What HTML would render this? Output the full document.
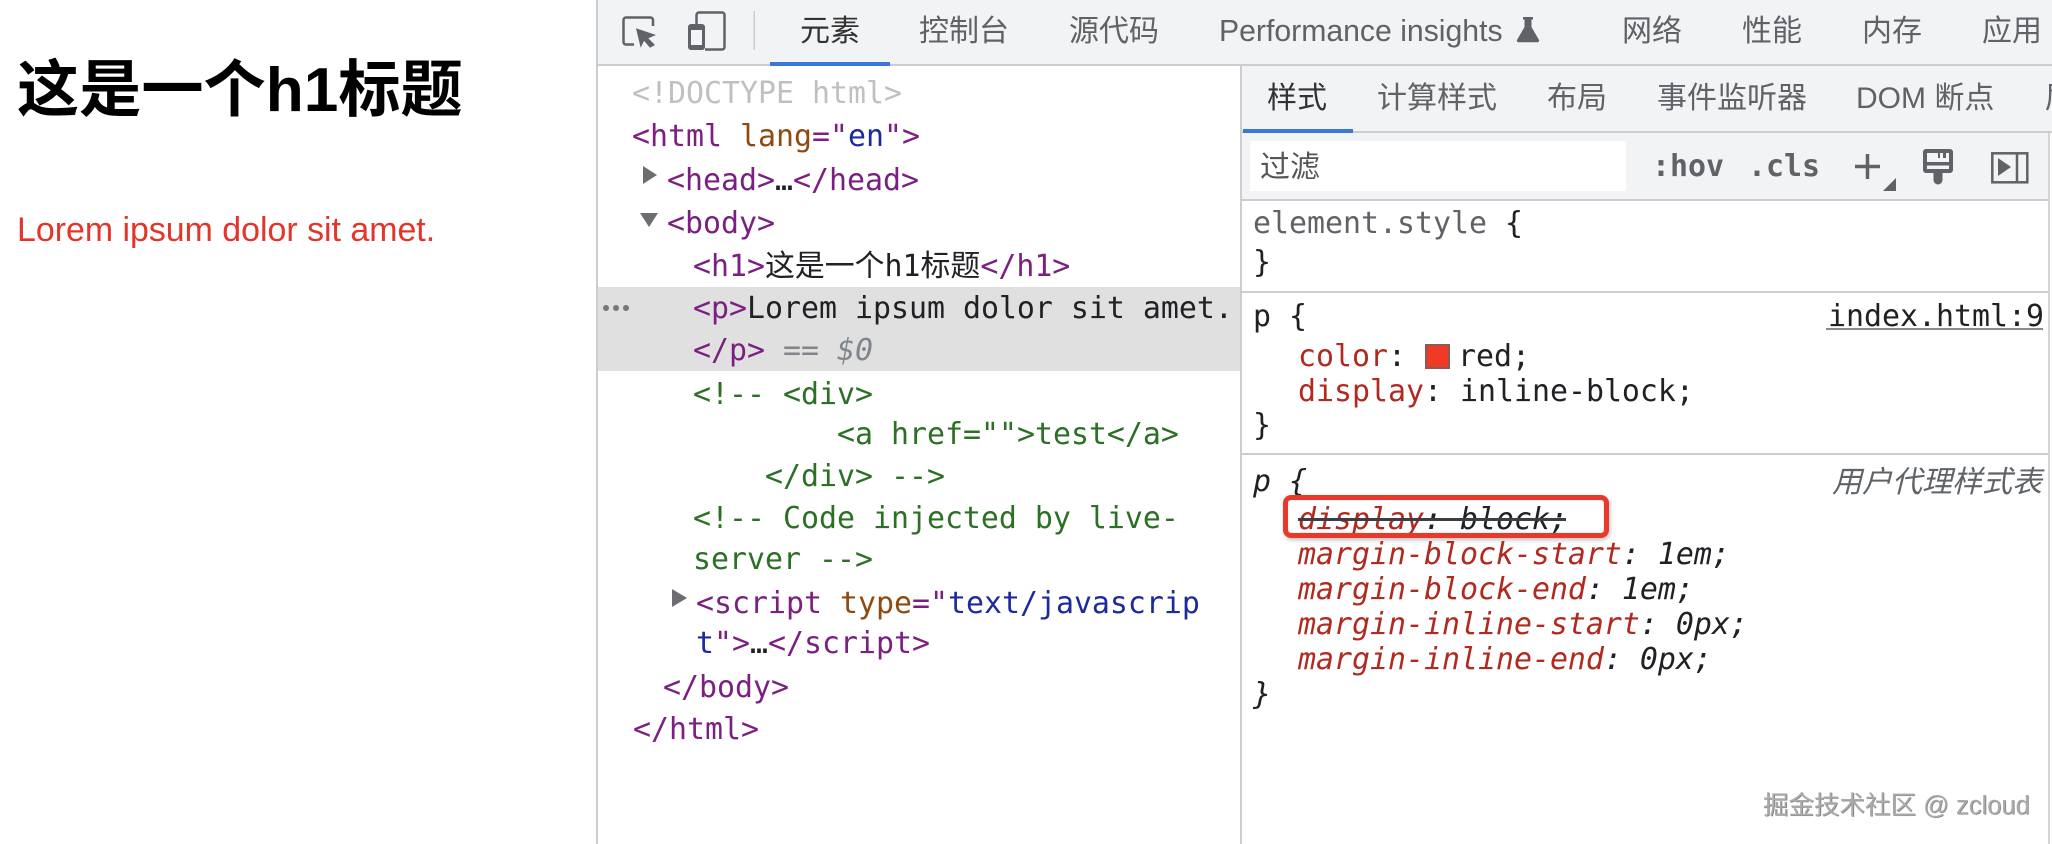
<!DOCTYPE html>
<html lang="zh"><head><meta charset="utf-8"><title>DevTools</title>
<style>
html,body{margin:0;padding:0;background:#fff;}
#r{position:relative;width:2052px;height:844px;overflow:hidden;background:#fff;filter:blur(.35px);}
#r>div{position:absolute;}
.b{background:#cbcdd0;}
.t{font:30px/40px "Liberation Sans","Noto Sans CJK SC",sans-serif;color:#5f6368;white-space:pre;margin-top:1px;}
.m{font:29.9px/40px "DejaVu Sans Mono","Liberation Mono","Noto Sans CJK SC",monospace;white-space:pre;color:#202124;margin-top:1px;}
.tg{color:#7b2080}.at{color:#8f4a12}.vl{color:#1c2a9c}.c{color:#2b7024}.pr{color:#b02a20}
.g{color:#5f6368}
.i{font-style:italic}
</style></head><body><div id="r">
<div style="left:0;top:0;width:597px;height:844px;background:#fff"></div>
<div style="left:17px;top:53px;font:bold 62.2px/76px 'Liberation Sans','Noto Sans CJK SC',sans-serif;color:#000;white-space:pre">这是一个h1标题</div>
<div style="left:17px;top:210px;font:33.9px/40px 'Liberation Sans',sans-serif;color:#e3352a;white-space:pre">Lorem ipsum dolor sit amet.</div>

<div style="left:597px;top:0;width:1455px;height:65px;background:#f1f3f4"></div>
<div class="b" style="left:597px;top:64px;width:1455px;height:2px"></div>
<div style="left:770px;top:62px;width:120px;height:4px;background:#3a76d8"></div>
<div class="b" style="left:596px;top:0;width:1.5px;height:844px"></div>

<div class="t" style="left:800px;top:11px;color:#333">元素</div>
<div class="t" style="left:919px;top:11px">控制台</div>
<div class="t" style="left:1069px;top:11px">源代码</div>
<div class="t" style="left:1219px;top:11px;font-size:30.2px">Performance insights</div>
<div class="t" style="left:1622px;top:11px">网络</div>
<div class="t" style="left:1742px;top:11px">性能</div>
<div class="t" style="left:1862px;top:11px">内存</div>
<div class="t" style="left:1982px;top:11px">应用</div>

<div style="left:598px;top:287px;width:642px;height:84px;background:#e0e0e0"></div>
<div style="left:603px;top:305px;width:6px;height:6px;border-radius:50%;background:#777;box-shadow:10px 0 #777,20px 0 #777"></div>

<div class="m" style="left:632px;top:73px;color:#c0c0c0">&lt;!DOCTYPE html&gt;</div>
<div class="m" style="left:632px;top:116px"><span class="tg">&lt;html</span> <span class="at">lang</span><span class="tg">="</span><span class="vl">en</span><span class="tg">"&gt;</span></div>
<div class="m" style="left:667px;top:160px"><span class="tg">&lt;head&gt;</span>…<span class="tg">&lt;/head&gt;</span></div>
<div class="m" style="left:667px;top:203px"><span class="tg">&lt;body&gt;</span></div>
<div class="m" style="left:693px;top:246px"><span class="tg">&lt;h1&gt;</span>这是一个h1标题<span class="tg">&lt;/h1&gt;</span></div>
<div class="m" style="left:693px;top:288px"><span class="tg">&lt;p&gt;</span>Lorem ipsum dolor sit amet.</div>
<div class="m" style="left:693px;top:330px"><span class="tg">&lt;/p&gt;</span> <span style="color:#80868b">==</span> <span class="i" style="color:#80868b">$0</span></div>
<div class="m c" style="left:693px;top:374px">&lt;!-- &lt;div&gt;</div>
<div class="m c" style="left:837px;top:414px">&lt;a href=""&gt;test&lt;/a&gt;</div>
<div class="m c" style="left:765px;top:456px">&lt;/div&gt; --&gt;</div>
<div class="m c" style="left:693px;top:498px">&lt;!-- Code injected by live-</div>
<div class="m c" style="left:693px;top:539px">server --&gt;</div>
<div class="m" style="left:696px;top:583px"><span class="tg">&lt;script</span> <span class="at">type</span><span class="tg">="</span><span class="vl">text/javascrip</span></div>
<div class="m" style="left:696px;top:623px"><span class="vl">t</span><span class="tg">"&gt;</span>…<span class="tg">&lt;/script&gt;</span></div>
<div class="m" style="left:663px;top:667px"><span class="tg">&lt;/body&gt;</span></div>
<div class="m" style="left:633px;top:709px"><span class="tg">&lt;/html&gt;</span></div>

<div style="left:1242px;top:66px;width:806px;height:134px;background:#f1f3f4"></div>
<div style="left:1242px;top:66px;width:810px;height:66px;background:#f1f3f4"></div>
<div class="b" style="left:1240px;top:66px;width:2px;height:778px"></div>
<div class="b" style="left:1242px;top:131px;width:810px;height:2px"></div>
<div style="left:1243px;top:129px;width:110px;height:4px;background:#3a76d8"></div>
<div class="t" style="left:1267px;top:78px;color:#333">样式</div>
<div class="t" style="left:1377px;top:78px">计算样式</div>
<div class="t" style="left:1547px;top:78px">布局</div>
<div class="t" style="left:1657px;top:78px">事件监听器</div>
<div class="t" style="left:1856px;top:78px">DOM 断点</div>
<div class="t" style="left:2045px;top:78px">层</div>
<div style="left:2048px;top:133px;width:4px;height:711px;background:#fff"></div>
<div style="left:2048px;top:133px;width:2px;height:711px;background:#d4d4d4"></div>

<div style="left:1250px;top:141px;width:376px;height:50px;background:#fff"></div>
<div class="t" style="left:1260px;top:147px;color:#555">过滤</div>
<div class="m g" style="left:1652px;top:146px;font-weight:bold">:hov</div>
<div class="m g" style="left:1748px;top:146px;font-weight:bold">.cls</div>
<div class="b" style="left:1242px;top:199px;width:806px;height:2px"></div>

<div class="m g" style="left:1253px;top:203px">element.style <span style="color:#202124">{</span></div>
<div class="m" style="left:1253px;top:242px">}</div>
<div class="b" style="left:1242px;top:291px;width:806px;height:2px"></div>

<div class="m" style="left:1253px;top:296px">p {</div>
<div class="m" style="left:1828px;top:296px">index.html:9</div>
<div style="left:1826px;top:328px;width:217px;height:2px;background:#8a8a8a"></div>
<div class="m" style="left:1298px;top:336px"><span class="pr">color</span>:</div>
<div style="left:1425px;top:344px;width:21px;height:21px;background:#f03a25;border:2px solid #8b5a55"></div>
<div class="m" style="left:1458px;top:336px">red;</div>
<div class="m" style="left:1298px;top:371px"><span class="pr">display</span>: inline-block;</div>
<div class="m" style="left:1253px;top:405px">}</div>
<div class="b" style="left:1242px;top:453px;width:806px;height:2px"></div>

<div class="m i" style="left:1253px;top:461px">p {</div>
<div class="t i" style="left:1832px;top:462px">用户代理样式表</div>
<div class="m i" style="left:1298px;top:499px"><span class="pr">display</span>: block;</div>
<div style="left:1298px;top:518px;width:268px;height:2.5px;background:#3a3f44"></div>
<div style="left:1283px;top:495px;width:316px;height:33px;border:5px solid #e8392a;border-radius:8px;box-shadow:1px 2px 4px rgba(0,0,0,.25),inset 0 0 2px rgba(0,0,0,.15)"></div>
<div class="m i" style="left:1298px;top:534px"><span class="pr">margin-block-start</span>: 1em;</div>
<div class="m i" style="left:1298px;top:569px"><span class="pr">margin-block-end</span>: 1em;</div>
<div class="m i" style="left:1298px;top:604px"><span class="pr">margin-inline-start</span>: 0px;</div>
<div class="m i" style="left:1298px;top:639px"><span class="pr">margin-inline-end</span>: 0px;</div>
<div class="m i" style="left:1253px;top:674px">}</div>

<div style="left:1763px;top:787px;font:25.5px/38px 'Liberation Sans','Noto Sans CJK SC',sans-serif;color:#aaa;white-space:pre;text-shadow:.7px .7px .5px #777">掘金技术社区 @ zcloud</div>

<svg style="position:absolute;left:0;top:0" width="2052" height="844" viewBox="0 0 2052 844">
<g fill="none" stroke="#5f6368" stroke-width="2.5">
<path d="M653 26V20a2.5 2.5 0 0 0-2.5-2.5H626a2.5 2.5 0 0 0-2.5 2.5V42a2.5 2.5 0 0 0 2.5 2.5H634"/>
<path d="M696.5 24V15a2.5 2.5 0 0 1 2.5-2.5H722a2.5 2.5 0 0 1 2.5 2.5V47a2.5 2.5 0 0 1-2.5 2.5H705"/>
<rect x="1992.3" y="153.3" width="35" height="29"/>
<path d="M2017 153V183"/>
<path d="M1855 166.5H1880M1867.5 154V179" stroke-width="3.5"/>
</g>
<path fill="#5f6368" d="M636 28.3L656 35L648.3 38.3L655 45L650 47.7L644 40.7L640.7 47.7Z"/>
<rect x="688" y="24" width="17" height="26" rx="3" fill="#5f6368"/>
<rect x="691" y="30" width="11" height="15" fill="#f1f3f4"/>
<rect x="753.5" y="11" width="1.5" height="39" fill="#cbcdd0"/>
<path fill="#5f6368" d="M1523 17H1533V19.5H1531.5V27L1539 40a1.5 1.5 0 0 1-1.5 2.2H1518.5A1.5 1.5 0 0 1 1517 40L1524.5 27V19.5H1523Z"/>
<path fill="#5f6368" d="M1883 191L1896 178V191Z"/>
<path fill="#5f6368" d="M1926 149H1950a3 3 0 0 1 3 3V170a3 3 0 0 1-3 3H1942.5V180a4.5 4.5 0 0 1-9 0V173H1926a3 3 0 0 1-3-3V152a3 3 0 0 1 3-3Z"/>
<path fill="#f1f3f4" d="M1927 153H1938V158H1940V153H1943V158H1946V153H1949V162H1927ZM1927 165.5H1949V169H1927Z"/>
<path fill="#5f6368" d="M1998 158L2011 167L1998 176Z"/>
<path fill="#6b6d70" d="M643 166L657 175L643 184Z"/>
<path fill="#6b6d70" d="M640 213H658L649 227Z"/>
<path fill="#6b6d70" d="M672 589L687 598L672 607Z"/>
</svg>
</div></body></html>
